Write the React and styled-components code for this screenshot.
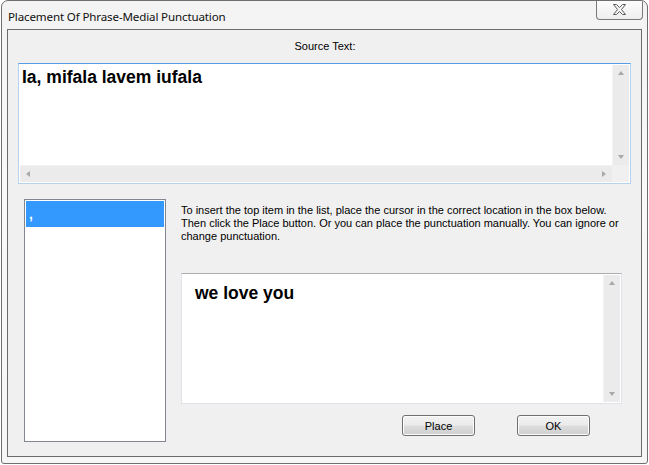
import React from 'react';
import styled, { createGlobalStyle } from 'styled-components';

const GlobalStyle = createGlobalStyle`
  html, body {
    margin: 0;
    padding: 0;
    background: #ffffff;
  }
  body {
    font-family: Tahoma, "Liberation Sans", Arial, sans-serif;
  }
`;

const Frame = styled.div`
  box-sizing: border-box;
  width: 647px;
  height: 464px;
  margin-left: 1px;
  border: 1px solid #6e6e6e;
  border-radius: 7px 7px 3px 3px;
  background: linear-gradient(180deg, #f3f3f3 0%, #f9f9f9 40%, #f6f6f6 100%);
  display: flex;
  flex-direction: column;
  padding: 0 5px 6px 5px;
  overflow: hidden;
`;

const TitleBar = styled.div`
  height: 28px;
  display: flex;
  align-items: flex-start;
  justify-content: space-between;
`;

const Title = styled.div`
  font-family: "Noto Sans", "Open Sans", sans-serif;
  font-size: 11.6px;
  color: #111;
  padding: 8px 0 0 1px;
  letter-spacing: -0.15px;
`;

const CloseButton = styled.div`
  box-sizing: border-box;
  width: 47px;
  height: 20px;
  margin-top: -1px;
  margin-right: -1px;
  border: 1px solid #7a7a7a;
  border-top: none;
  border-radius: 0 0 4px 4px;
  background: linear-gradient(180deg, #fdfdfd, #eeeeee);
  display: flex;
  align-items: center;
  justify-content: center;
`;

const Client = styled.div`
  flex: 1;
  border: 1px solid #6b6b6b;
  background: #f0f0f0;
  padding: 0 9px 0 10px;
  display: flex;
  flex-direction: column;
`;

const Label = styled.div`
  font-size: 11px;
  color: #000;
  text-align: center;
  height: 33px;
  line-height: 32px;
`;

const TextBox = styled.div`
  box-sizing: border-box;
  width: ${p => p.$w}px;
  height: ${p => p.$h}px;
  background: #fff;
  border: 1px solid ${p => (p.$focused ? '#b5d3ef' : '#e2e3ea')};
  border-top-color: ${p => (p.$focused ? '#569de5' : '#abadb3')};
  display: grid;
  grid-template-columns: 1fr 17px;
  grid-template-rows: ${p => (p.$hscroll ? '1fr 17px' : '1fr')};
  padding: 1px;
`;

const Content = styled.div`
  font-family: "Liberation Sans", Arial, sans-serif;
  font-weight: bold;
  font-size: 17.5px;
  color: #000;
  padding: ${p => p.$pad};
`;

const VScroll = styled.div`
  background: #ebebeb;
  border-left: 1px solid #f3f3f3;
  display: flex;
  flex-direction: column;
  justify-content: space-between;
  align-items: center;
  padding: 6px 0;
`;

const HScroll = styled.div`
  background: #ebebeb;
  border-top: 1px solid #f3f3f3;
  display: flex;
  justify-content: space-between;
  align-items: center;
  padding: 0 6px;
`;

const Corner = styled.div`
  background: #f0f0f0;
`;

const Arrow = styled.div`
  width: 0;
  height: 0;
  border-style: solid;
  ${p => p.$dir === 'up' && `border-width: 0 3.5px 4px 3.5px; border-color: transparent transparent #a8a8a8 transparent;`}
  ${p => p.$dir === 'down' && `border-width: 4px 3.5px 0 3.5px; border-color: #a8a8a8 transparent transparent transparent;`}
  ${p => p.$dir === 'left' && `border-width: 3.5px 4px 3.5px 0; border-color: transparent #a8a8a8 transparent transparent;`}
  ${p => p.$dir === 'right' && `border-width: 3.5px 0 3.5px 4px; border-color: transparent transparent transparent #a8a8a8;`}
`;

const Lower = styled.div`
  display: flex;
  gap: 15px;
  margin-top: 15px;
  padding-left: 6px;
`;

const ListBox = styled.div`
  box-sizing: border-box;
  width: 142px;
  height: 243px;
  background: #fff;
  border: 1px solid #828790;
  padding: 1px;
`;

const ListItem = styled.div`
  height: 26px;
  background: ${p => (p.$selected ? '#3399ff' : 'transparent')};
  color: ${p => (p.$selected ? '#fff' : '#000')};
  font-family: "Liberation Sans", Arial, sans-serif;
  font-weight: bold;
  font-size: 14px;
  line-height: 26px;
  padding-left: 3px;
`;

const RightCol = styled.div`
  width: 441px;
  display: flex;
  flex-direction: column;
  padding-top: 5px;
`;

const Instructions = styled.div`
  font-size: 11px;
  line-height: 13px;
  color: #000;
  height: 69px;
`;

const ButtonRow = styled.div`
  display: flex;
  justify-content: flex-end;
  gap: 42px;
  padding-right: 32px;
  margin-top: 11px;
`;

const Button = styled.button`
  box-sizing: border-box;
  width: 73px;
  height: 21px;
  border: 1px solid #707070;
  border-radius: 3px;
  background: linear-gradient(180deg, #f2f2f2 0%, #ebebeb 48%, #dddddd 52%, #cfcfcf 100%);
  box-shadow: inset 0 0 0 1px #fcfcfc;
  font-family: Tahoma, "Liberation Sans", Arial, sans-serif;
  font-size: 11px;
  color: #000;
  padding: 0;
`;

const CloseGlyph = () => (
  <svg width="15" height="11" viewBox="0 0 15 11">
    <path
      d="M1.5 0.5 H4.5 L7.5 3.5 L10.5 0.5 H13.5 L9.5 5.5 L13.5 10.5 H10.5 L7.5 7.5 L4.5 10.5 H1.5 L5.5 5.5 Z"
      fill="#f4f4f4"
      stroke="#5a5a5a"
      strokeWidth="1"
      strokeLinejoin="round"
    />
  </svg>
);

function App() {
  return (
    <>
      <GlobalStyle />
      <Frame>
        <TitleBar>
          <Title>Placement Of Phrase-Medial Punctuation</Title>
          <CloseButton>
            <CloseGlyph />
          </CloseButton>
        </TitleBar>
        <Client>
          <Label>Source Text:</Label>
          <TextBox $w={613} $h={121} $focused $hscroll>
            <Content $pad="2px 0 0 2px">Ia, mifala lavem iufala</Content>
            <VScroll>
              <Arrow $dir="up" />
              <Arrow $dir="down" />
            </VScroll>
            <HScroll>
              <Arrow $dir="left" />
              <Arrow $dir="right" />
            </HScroll>
            <Corner />
          </TextBox>
          <Lower>
            <ListBox>
              <ListItem $selected>,</ListItem>
            </ListBox>
            <RightCol>
              <Instructions>
                To insert the top item in the list, place the cursor in the correct location in the box below.
                <br />
                Then click the Place button. Or you can place the punctuation manually. You can ignore or
                <br />
                change punctuation.
              </Instructions>
              <TextBox $w={441} $h={131}>
                <Content $pad="8px 0 0 12px">we love you</Content>
                <VScroll>
                  <Arrow $dir="up" />
                  <Arrow $dir="down" />
                </VScroll>
              </TextBox>
              <ButtonRow>
                <Button>Place</Button>
                <Button>OK</Button>
              </ButtonRow>
            </RightCol>
          </Lower>
        </Client>
      </Frame>
    </>
  );
}

export default App;
